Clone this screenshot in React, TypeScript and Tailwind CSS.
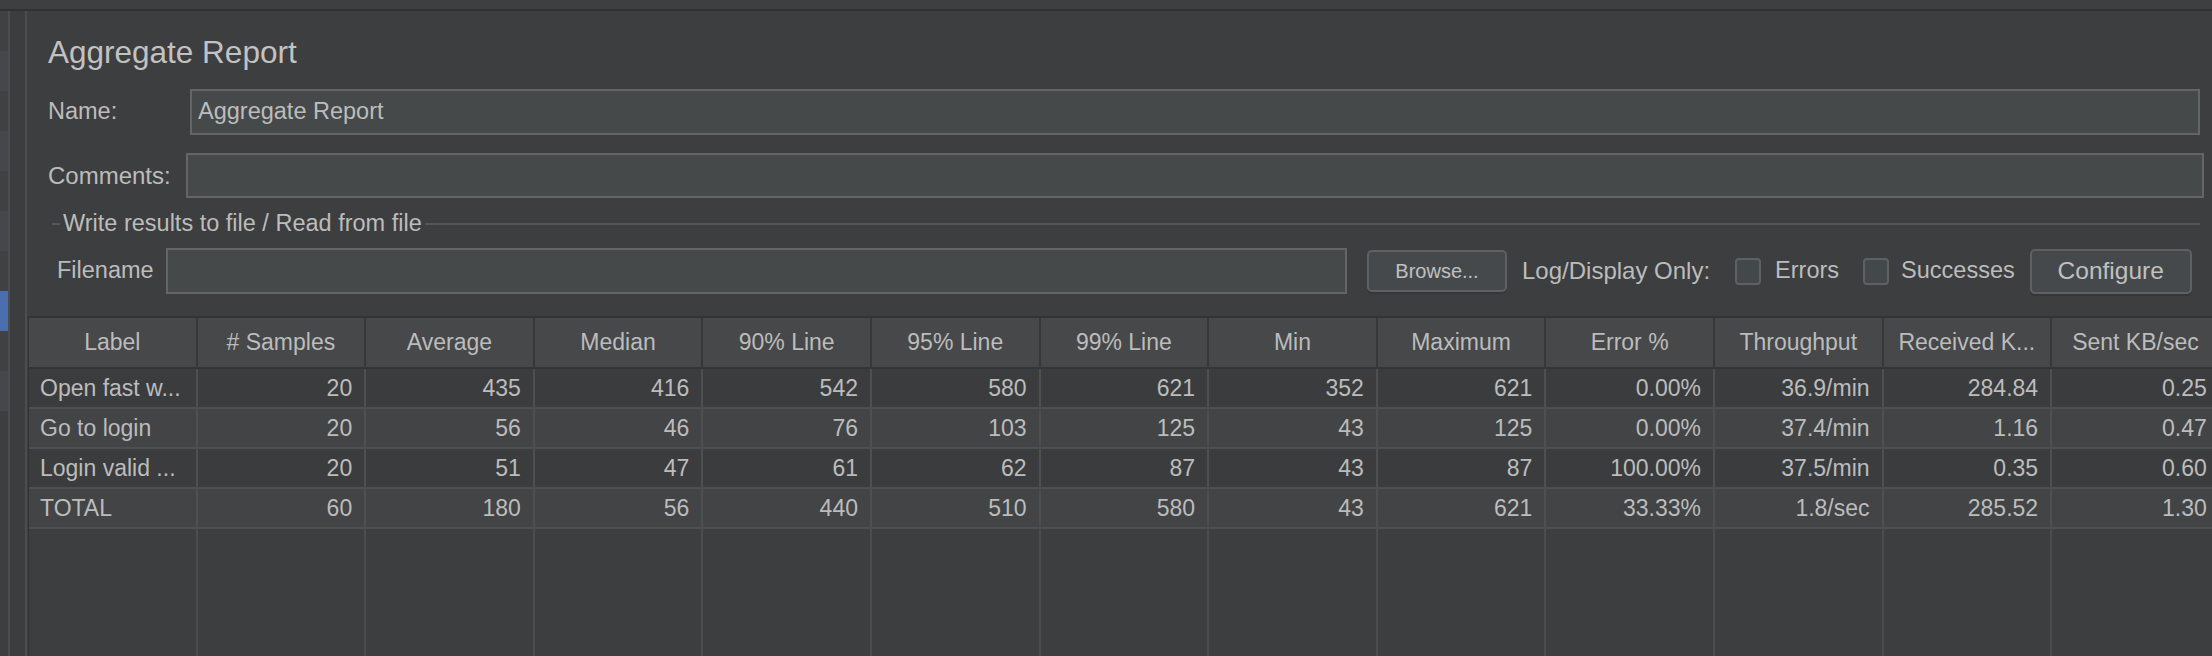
import React from "react";

const columns = [
  "Label",
  "# Samples",
  "Average",
  "Median",
  "90% Line",
  "95% Line",
  "99% Line",
  "Min",
  "Maximum",
  "Error %",
  "Throughput",
  "Received K...",
  "Sent KB/sec",
];

const rows = [
  ["Open fast w...", "20", "435", "416", "542", "580", "621", "352", "621", "0.00%", "36.9/min", "284.84", "0.25"],
  ["Go to login", "20", "56", "46", "76", "103", "125", "43", "125", "0.00%", "37.4/min", "1.16", "0.47"],
  ["Login valid ...", "20", "51", "47", "61", "62", "87", "43", "87", "100.00%", "37.5/min", "0.35", "0.60"],
  ["TOTAL", "60", "180", "56", "440", "510", "580", "43", "621", "33.33%", "1.8/sec", "285.52", "1.30"],
];

function Checkbox() {
  return <div className="w-[26px] h-[27px] rounded-[4px] border-2 border-[#5e6062] bg-[#43484a] shrink-0" />;
}

function ResultsTable() {
  return (
    <div className="mt-[22px] ml-px flex-1 flex flex-col overflow-hidden border-t-2 border-l border-[#323335] text-[23px]">
      {/* header */}
      <div className="grid grid-cols-[repeat(13,168.6px)] h-[51px] bg-[#46484a] border-b-2 border-[#343537] shrink-0">
        {columns.map((c) => (
          <div key={c} className="flex items-center justify-center border-r-2 border-[#37383a] whitespace-nowrap overflow-hidden">
            {c}
          </div>
        ))}
      </div>

      {rows.map((r, i) => (
        <div
          key={r[0]}
          className={`grid grid-cols-[repeat(13,168.6px)] h-[40px] border-b-2 border-[#4d4f51] shrink-0 ${
            i % 2 === 0 ? "bg-[#3b3c3e]" : "bg-[#424446]"
          }`}
        >
          {r.map((v, j) => (
            <div
              key={j}
              className={`flex items-center border-r-2 border-[#4d4f51] whitespace-nowrap overflow-hidden ${
                j === 0 ? "justify-start pl-[11px]" : "justify-end pr-[12px]"
              }`}
            >
              {v}
            </div>
          ))}
        </div>
      ))}

      {/* empty area */}
      <div className="grid grid-cols-[repeat(13,168.6px)] flex-1">
        {columns.map((c) => (
          <div key={c} className="border-r-2 border-[#4b4c4e]" />
        ))}
      </div>
    </div>
  );
}

export default function App() {
  return (
    <div
      className="w-[2212px] h-[656px] bg-[#3d3e40] text-[#bcbcbc] overflow-hidden flex flex-col"
      style={{ fontFamily: '"Liberation Sans", Arial, sans-serif' }}
    >
      {/* top strip */}
      <div className="h-[11px] bg-[#3e3f41] border-b-2 border-[#303133] shrink-0" />

      <div className="flex-1 flex min-h-0">
        {/* tree (cut off) */}
        <div className="w-[8px] flex flex-col shrink-0">
          {Array.from({ length: 10 }).map((_, i) => (
            <div
              key={i}
              className={`h-[40px] ${
                i === 7 ? "bg-[#4b6eaf]" : i % 2 === 0 ? "bg-[#404143]" : "bg-[#46474a]"
              }`}
            />
          ))}
        </div>

        {/* splitter */}
        <div className="w-[19px] shrink-0 border-x-2 border-[#4c4d4f] bg-[#3c3d3f]" />

        {/* panel */}
        <div className="flex-1 min-w-0 flex flex-col">
          <div className="mt-[23px] pl-[21px] text-[31.5px] leading-[36px] text-[#c2c2c2]">Aggregate Report</div>

          <div className="mt-[19px] pl-[21px] pr-[12px] flex items-center text-[23.5px]">
            <div className="w-[142px] shrink-0">Name:</div>
            <div className="flex-1 h-[46px] border-2 border-[#646566] bg-[#45494a] flex items-center pl-[6px]">
              Aggregate Report
            </div>
          </div>

          <div className="mt-[18px] pl-[21px] pr-[8px] flex items-center text-[23.5px]">
            <div className="w-[138px] shrink-0 text-[24px]">Comments:</div>
            <div className="flex-1 h-[45px] border-2 border-[#646566] bg-[#45494a]" />
          </div>

          {/* titled border */}
          <div className="mt-[12px] pl-[25px] pr-[12px] h-[28px] flex items-center text-[23.5px]">
            <div className="w-[8px] h-[2px] bg-[#555658]" />
            <span className="ml-[3px] whitespace-nowrap">Write results to file / Read from file</span>
            <div className="flex-1 ml-[3px] h-[2px] bg-[#555658]" />
          </div>

          <div className="mt-[10px] pl-[30px] flex items-center text-[23.5px]">
            <div className="w-[109px] shrink-0">Filename</div>
            <div className="w-[1181px] h-[46px] border-2 border-[#646566] bg-[#45494a] shrink-0" />
            <button className="ml-[20px] w-[140px] h-[42px] rounded-[5px] border-2 border-[#5e6062] bg-[#46494b] text-[20px] text-[#c0c0c0] shadow-[0_2px_0_#353638]">
              Browse...
            </button>
            <span className="ml-[15px] whitespace-nowrap text-[24px]">Log/Display Only:</span>
            <div className="ml-[25px]">
              <Checkbox />
            </div>
            <span className="ml-[14px]">Errors</span>
            <div className="ml-[24px]">
              <Checkbox />
            </div>
            <span className="ml-[12px]">Successes</span>
            <button className="ml-[15px] w-[162px] h-[45px] rounded-[5px] border-2 border-[#5e6062] bg-[#46494b] text-[24.5px] text-[#c0c0c0] shadow-[0_2px_0_#353638]">
              Configure
            </button>
          </div>

          <ResultsTable />
        </div>
      </div>
    </div>
  );
}
